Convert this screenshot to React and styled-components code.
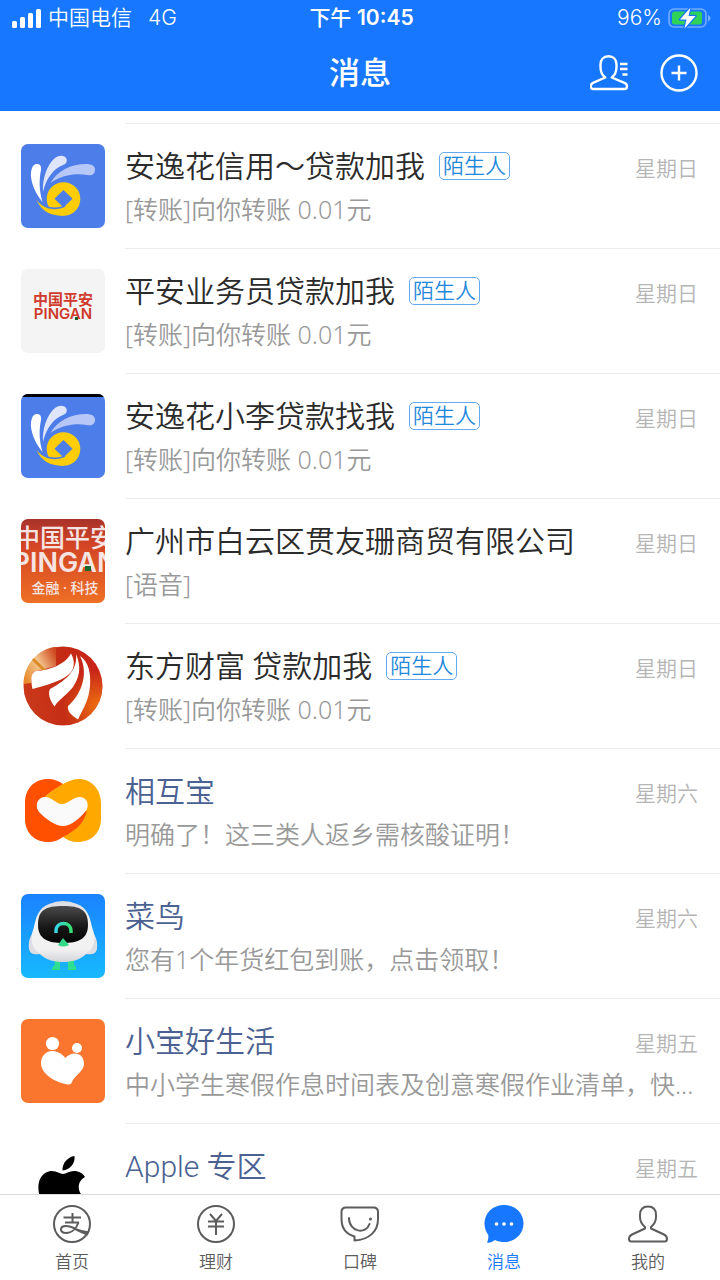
import React from 'react'
import styled, { createGlobalStyle } from 'styled-components'


const chats = [
    { id: 1, name: '安逸花信用～贷款加我', text: '[转账]向你转账 0.01元', time: '星期日', stranger: true, Avatar: FlowerAvatar },
    { id: 2, name: '平安业务员贷款加我', text: '[转账]向你转账 0.01元', time: '星期日', stranger: true, Avatar: PinganAvatar },
    { id: 3, name: '安逸花小李贷款找我', text: '[转账]向你转账 0.01元', time: '星期日', stranger: true, Avatar: FlowerBarAvatar },
    { id: 4, name: '广州市白云区贯友珊商贸有限公司', text: '[语音]', time: '星期日', Avatar: PinganPhotoAvatar },
    { id: 5, name: '东方财富 贷款加我', text: '[转账]向你转账 0.01元', time: '星期日', stranger: true, Avatar: FortuneAvatar },
    { id: 6, name: '相互宝', text: '明确了！这三类人返乡需核酸证明！', time: '星期六', official: true, Avatar: XianghubaoAvatar },
    { id: 7, name: '菜鸟', text: '您有1个年货红包到账，点击领取！', time: '星期六', official: true, Avatar: CainiaoAvatar },
    { id: 8, name: '小宝好生活', text: '中小学生寒假作息时间表及创意寒假作业清单，快...', time: '星期五', official: true, Avatar: XiaobaoAvatar },
    { id: 9, name: 'Apple 专区', text: '', time: '星期五', official: true, Avatar: AppleAvatar },
]

const tabs = [
    { name: '首页', Icon: HomeIcon },
    { name: '理财', Icon: WealthIcon },
    { name: '口碑', Icon: KoubeiIcon },
    { name: '消息', Icon: MessageIcon, active: true },
    { name: '我的', Icon: MineIcon },
]

function App() {
  return (
    <Page>
      <GlobalStyle />
      <Header>
        <StatusBar>
            <StatusSide>
                <SignalIcon />
                <span>中国电信</span>
                <Network>4G</Network>
            </StatusSide>
            <Clock>下午 <b>10:45</b></Clock>
            <StatusSide $end>
                <span>96%</span>
                <BatteryIcon />
            </StatusSide>
        </StatusBar>
        <TitleBar>
            <PageTitle>消息</PageTitle>
            <Actions>
                <IconButton aria-label="通讯录"><ContactsIcon /></IconButton>
                <IconButton aria-label="添加"><AddIcon /></IconButton>
            </Actions>
        </TitleBar>
      </Header>
      <ChatList>
        {chats.map(({ id, name, text, time, stranger, official, Avatar }) => (
            <ChatRow key={id}>
                <Avatar />
                <ChatBody>
                    <ChatTop>
                        <ChatName $official={official}>{name}</ChatName>
                        {stranger && <Badge>陌生人</Badge>}
                        <Time>{time}</Time>
                    </ChatTop>
                    <Preview>{text}</Preview>
                </ChatBody>
            </ChatRow>
        ))}
      </ChatList>
      <TabBar>
        {tabs.map(({ name, Icon, active }) => (
            <Tab key={name} $active={active}>
                <Icon />
                <span>{name}</span>
            </Tab>
        ))}
      </TabBar>
    </Page>
  )
}

/* ---------- status bar and header icons ---------- */

function SignalIcon() {
    return (
        <svg width="30" height="19" viewBox="0 0 30 19" fill="#fff">
            <rect x="0" y="12" width="5" height="7" rx="1.5" />
            <rect x="8" y="8" width="5" height="11" rx="1.5" />
            <rect x="16" y="4" width="5" height="15" rx="1.5" />
            <rect x="24" y="0" width="5" height="19" rx="1.5" />
        </svg>
    )
}

function BatteryIcon() {
    return (
        <svg width="43" height="22" viewBox="0 0 43 22">
            <rect x="1" y="2" width="37" height="18" rx="5" fill="none" stroke="#74acff" strokeWidth="1.6" />
            <path d="M40 8q2.500 .800 2.500 3.200t-2.500 3.200z" fill="#74acff" />
            <rect x="4" y="4.500" width="30" height="13" rx="2.500" fill="#30d158" />
            <path d="M22.500 .500L12 12.500h6.500L16.500 21.500 27.500 9H20.500z" fill="#fff" stroke="#1777ff" strokeWidth="2.400" strokeLinejoin="round" paintOrder="stroke" />
        </svg>
    )
}

function ContactsIcon() {
    return (
        <svg width="40" height="38" viewBox="0 0 40 38" fill="none" stroke="#fff" strokeWidth="2.400" strokeLinejoin="round">
            <path d="M15.200 23.500C12 21 10.500 17 10.500 13V10.500C10.500 5.500 13.500 2.200 18.500 2.200S26.500 5.500 26.500 10.500V13C26.500 17 25 21 21.800 23.500L34.500 28.800C36.200 29.500 37 30.800 37 32.300C37 34.300 36 35 34.500 35H3C1.500 35 .800 34.300 .800 32.300C.800 30.800 1.500 29.500 3 28.800Z" />
            <path d="M30 10H37.500M30 15H37.500M32.500 20.500H37.500" />
        </svg>
    )
}

function AddIcon() {
    return (
        <svg width="40" height="40" viewBox="0 0 40 40" fill="none" stroke="#fff" strokeWidth="2.400">
            <circle cx="20" cy="20" r="17.500" />
            <path d="M12.500 20H27.500M20 12.500V27.500" />
        </svg>
    )
}

/* ---------- avatars ---------- */

function FlowerDrawing() {
    return (
        <>
            <path d="M21.500 58C14 49 9 37 10 28C11 22 13 20 16 20C19 20 20.500 22 20 26C18 36 18 46 21.500 58Z" fill="#fff" />
            <path d="M22 48C21 36 26 20 34 14C38 11 43 11 45 14C47 17 45 20 42 21C32 25 25 35 22 48Z" fill="#dfe6fc" />
            <path d="M29.500 39C36 27 50 20 65 20C71 20 74 22 74 26C74 30 71 32 66 31C54 29 41 31 29.500 39Z" fill="#b7c8f8" />
            <circle cx="42.500" cy="55" r="16.800" fill="#fecd08" />
            <path d="M15.500 56C20 67 30 72 42 71.800L46 66C34 67 22 65 15.500 56Z" fill="#fecd08" />
            <path d="M19 58C26 65 36 66 44 62" fill="none" stroke="#4c7de8" strokeWidth="1.600" />
            <path d="M42.500 46L51.500 54.800L42.500 63.500L33.500 54.800Z" fill="#4c7de8" />
        </>
    )
}

function FlowerAvatar() {
    return (
        <AvatarSvg viewBox="0 0 84 84">
            <rect width="84" height="84" fill="#4c7de8" />
            <FlowerDrawing />
        </AvatarSvg>
    )
}

function FlowerBarAvatar() {
    return (
        <AvatarSvg viewBox="0 0 84 84">
            <rect width="84" height="84" fill="#4c7de8" />
            <rect width="84" height="3" fill="#000" />
            <FlowerDrawing />
        </AvatarSvg>
    )
}

function PinganAvatar() {
    return (
        <PinganBox>
            <span>中国平安</span>
            <b>PINGAN</b>
        </PinganBox>
    )
}

function PinganPhotoAvatar() {
    return (
        <PhotoBox>
            <span>中国平安</span>
            <b>PINGAN</b>
            <small>金融 · 科技</small>
        </PhotoBox>
    )
}

function FortuneAvatar() {
    return (
        <AvatarSvg viewBox="0 0 84 84">
            <defs>
                <linearGradient id="fortune" x1="0" y1="0.600" x2="1" y2="0.400">
                    <stop offset="0" stopColor="#c9391a" />
                    <stop offset="0.600" stopColor="#c42a14" />
                    <stop offset="1" stopColor="#c9241a" />
                </linearGradient>
                <radialGradient id="fortuneGlow" cx="0.950" cy="0.750" r="0.450">
                    <stop offset="0" stopColor="#ee7010" />
                    <stop offset="1" stopColor="#ee7010" stopOpacity="0" />
                </radialGradient>
                <linearGradient id="fortuneShine" x1="0" y1="0.800" x2="1" y2="0.200">
                    <stop offset="0" stopColor="#e88a2c" />
                    <stop offset="0.500" stopColor="#f3c890" />
                    <stop offset="1" stopColor="#cf4a20" />
                </linearGradient>
            </defs>
            <circle cx="42" cy="42" r="39.500" fill="url(#fortune)" />
            <circle cx="42" cy="42" r="39.500" fill="url(#fortuneGlow)" />
            <path d="M2.500 40C3 20 18 4 35 3L35 22L12 28L10 39Z" fill="url(#fortuneShine)" />
            <path d="M12 15L24 27" stroke="#dc8a24" strokeWidth="3" />
            <path d="M11.500 45C10 38 10 32 12 29Q13 27 16 27C28 26 44 21 50 9.500C55 18 53 27 47 31C40 37 26 41 11.500 45Z" fill="#fff" />
            <path d="M55 10C61 24 58 34 52 43C46 51 38 55 33.500 62.500C28 55 27 49 29 45C42 38 57 28 55 10Z" fill="#fff" />
            <path d="M59 12C68 18 70 30 69 42C68 56 62 65 57 75.500C50 71 46 67 47 62C58 53 69 32 59 12Z" fill="#fff" />
        </AvatarSvg>
    )
}

function XianghubaoAvatar() {
    return (
        <AvatarSvg viewBox="0 0 84 84">
            <path d="M42 15C47 12 53 10 58 10C70 10 80 20 80 34V50C80 64 70 73 57 73C51 73 46 71 42 68L22 30C28 23 35 20 42 15Z" fill="#ffa900" />
            <path d="M27 10C33 10 38 12 42 15C35 20 28 23 22 30L41 40L66 41C64 54 54 62 42 68C38 71 33 73 27 73C13 73 4 63 4 50V34C4 20 13 10 27 10Z" fill="#ff5000" />
            <path d="M42 15C35 20 28 23 22 30L41 40L66 42V20Z" fill="#ffa900" />
            <path d="M24 28C31 28 35 35 41 35S52 28 59 28C67 28 69 38 64 43C59 49 50 57 42 57C34 57 24 49 19 44C13 38 16 28 24 28Z" fill="#fafafa" />
        </AvatarSvg>
    )
}

function CainiaoAvatar() {
    return (
        <AvatarSvg viewBox="0 0 84 84">
            <defs>
                <linearGradient id="sky" x1="0" y1="0" x2="0" y2="1">
                    <stop offset="0" stopColor="#1a82ff" />
                    <stop offset="1" stopColor="#18b9ff" />
                </linearGradient>
                <linearGradient id="shell" x1="0" y1="0" x2="0" y2="1">
                    <stop offset="0" stopColor="#d9dce2" />
                    <stop offset="0.300" stopColor="#f4f4f5" />
                    <stop offset="0.800" stopColor="#f1f1f2" />
                    <stop offset="1" stopColor="#d3d4d8" />
                </linearGradient>
                <linearGradient id="visor" x1="0" y1="0" x2="0" y2="1">
                    <stop offset="0" stopColor="#4a4a4c" />
                    <stop offset="0.600" stopColor="#151515" />
                    <stop offset="1" stopColor="#050505" />
                </linearGradient>
                <linearGradient id="eye" x1="0" y1="0" x2="1" y2="0">
                    <stop offset="0" stopColor="#35d7e8" />
                    <stop offset="1" stopColor="#35e070" />
                </linearGradient>
            </defs>
            <rect width="84" height="84" fill="url(#sky)" />
            <path d="M33 66H39V76H31Q31 72 34 71ZM47 66H53V71Q56 72 55 76H47Z" fill="#2fdf8f" />
            <path d="M16 34C9 40 7 48 8 55C9 60 14 61 19 60ZM68 34C75 40 77 48 76 55C75 60 70 61 65 60Z" fill="#dcdee3" />
            <path d="M28 10Q42 4 56 10C67 14 69 24 71 33C76 46 73 55 64 61C58 66 51 68 42 68S26 66 20 61C11 55 8 46 13 33C15 24 17 14 28 10Z" fill="url(#shell)" />
            <path d="M42 12C60 12 67 16 67 31C67 45 57 49 42 49S17 45 17 31C17 16 24 12 42 12Z" fill="url(#visor)" />
            <path d="M35 39V37C35 27 50 27 50 37V39" fill="none" stroke="url(#eye)" strokeWidth="3.400" />
            <path d="M42 44L48 51Q42 54 37 51Z" fill="#35d98c" />
        </AvatarSvg>
    )
}

function XiaobaoAvatar() {
    return (
        <AvatarSvg viewBox="0 0 84 84">
            <rect width="84" height="84" fill="#fa762f" />
            <circle cx="31.500" cy="24.500" r="6.600" fill="#fff" />
            <circle cx="56" cy="29" r="5" fill="#fff" />
            <path d="M44.500 39C40 34 36 32 31 32C25 32 20 37 20 44C20 54 32 63 47 65.500Q50 66 51 63C53 57 63 52 63 45C63 38 59 34.500 54 34.500C50 34.500 47 36 44.500 39Z" fill="#fff" />
        </AvatarSvg>
    )
}

function AppleAvatar() {
    return (
        <AvatarSvg viewBox="0 0 84 84">
            <path d="M53.500 12C54.500 19 49 26 41.500 26.500C41 19.500 46.500 13 53.500 12Z" />
            <path d="M42 30C45 30 48 27 53 27C58 27 62 29.500 64 33C55 38 56 50 65 54C62 63 57 71 52 71C48 71 46 69 42 69S35 71 32 71C25 71 13 49 19 35C22 29 27 27 31 27C36 27 39 30 42 30Z" />
        </AvatarSvg>
    )
}

/* ---------- tab icons ---------- */

function HomeIcon() {
    return (
        <svg width="40" height="40" viewBox="0 0 40 40" fill="none" stroke="currentColor" strokeWidth="2">
            <circle cx="20" cy="20" r="18" />
            <path d="M11.500 13.500H29M20.500 9V19M13 18.500H27" />
            <path d="M26.500 18.500C24.500 24 20 29 14 29C7 29 7.500 22 14 22C18 22 21 23.500 24 25" />
            <path d="M22 23.500C27 25.500 32 26.500 37.500 27.500L35.500 31.500C31 30 26 28 21 25Z" fill="currentColor" stroke="none" />
        </svg>
    )
}

function WealthIcon() {
    return (
        <svg width="40" height="40" viewBox="0 0 40 40" fill="none" stroke="currentColor" strokeWidth="2">
            <circle cx="20" cy="20" r="18" />
            <path d="M14 10L20 17L26 10M12 17.500H28M12 22.500H28M20 17V31" />
        </svg>
    )
}

function KoubeiIcon() {
    return (
        <svg width="40" height="40" viewBox="0 0 40 40" fill="none" stroke="currentColor" strokeWidth="2" strokeLinejoin="round">
            <path d="M6 3.500H33.500Q38 3.500 38 8V15C38 27 30 35.500 14.500 36.500V32.500C6 30 1.500 24 1.500 15V8Q1.500 3.500 6 3.500Z" />
            <path d="M9 14C9 28 26 31 29.500 20" strokeLinecap="round" />
            <circle cx="30.500" cy="15" r="1.500" fill="currentColor" stroke="none" />
        </svg>
    )
}

function MessageIcon() {
    return (
        <svg width="40" height="40" viewBox="0 0 40 40" fill="currentColor">
            <path d="M20 1C31 1 39.500 9 39.500 19.500S31 38 20 38C17 38 14 37.400 11 36C8.500 38 5.500 39 3 38.500C4.500 36 4.500 33 4.300 31C2 28 .500 24 .500 19.500C.500 9 9 1 20 1Z" />
            <g fill="#fff">
                <circle cx="12.500" cy="20" r="1.800" />
                <circle cx="20" cy="20" r="1.800" />
                <circle cx="27.500" cy="20" r="1.800" />
            </g>
        </svg>
    )
}

function MineIcon() {
    return (
        <svg width="40" height="40" viewBox="0 0 40 40" fill="none" stroke="currentColor" strokeWidth="2" strokeLinejoin="round">
            <path d="M17 24.500V23C14 20.500 12 17 12 13V11C12 5.500 15 2.500 20 2.500S28 5.500 28 11V13C28 17 26 20.500 23 23V24.500L36 30.500Q39 32 39 35Q39 37.500 36.500 37.500H3.500Q1 37.500 1 35Q1 32 4 30.500Z" />
        </svg>
    )
}

const GlobalStyle = createGlobalStyle`
    *{
        box-sizing: border-box;
    }

    body{
        margin: 0;
        background-color: #fff;
        font-family: Roboto, 'Noto Sans CJK SC', sans-serif;
        font-weight: 350;
    }

    svg{
        display: block;
        flex-shrink: 0;
    }

    button{
        border: none;
        padding: 0;
        background: none;
        font: inherit;
        cursor: pointer;
    }
`;

const Page = styled.div`
    height: 100vh;
    display: flex;
    flex-direction: column;
`;

const Header = styled.header`
    background-color: #1777ff;
    color: #fff;
    padding-bottom: 10px;
    margin-bottom: 12px;
`;

const StatusBar = styled.div`
    display: grid;
    grid-template-columns: 1fr auto 1fr;
    align-items: center;
    height: 36px;
    padding: 0 9px 0 12px;
    font-family: Inter, 'Noto Sans CJK SC', sans-serif;
    font-size: 21px;
    line-height: 36px;
`;

const StatusSide = styled.div`
    display: flex;
    align-items: center;
    gap: 6px;
    justify-content: ${({ $end }) => $end ? 'flex-end' : 'flex-start'};
`;

const Network = styled.span`
    margin-left: 10px;
`;

const Clock = styled.div`
    font-weight: 500;

    b{
        font-weight: 600;
    }
`;

const TitleBar = styled.div`
    display: grid;
    grid-template-columns: 1fr auto 1fr;
    align-items: center;
    height: 65px;
    padding: 8px 21px 0;
`;

const PageTitle = styled.h1`
    grid-column: 2;
    margin: 0;
    padding-top: 2px;
    font-size: 31px;
    line-height: 44px;
    font-weight: 500;
`;

const Actions = styled.div`
    display: flex;
    align-items: center;
    justify-content: flex-end;
    gap: 29px;
`;

const IconButton = styled.button`
    color: #fff;
`;

const ChatList = styled.ul`
    flex: 1;
    min-height: 0;
    overflow: hidden;
    margin: 0;
    padding: 0;
    list-style: none;
`;

const ChatRow = styled.li`
    display: flex;
    align-items: center;
    height: 125px;
    padding-left: 21px;
    gap: 20px;
`;

const AvatarSvg = styled.svg`
    width: 84px;
    height: 84px;
    border-radius: 7px;
`;

const PinganBox = styled.div`
    position: relative;
    width: 84px;
    height: 84px;
    flex-shrink: 0;
    border-radius: 7px;
    background-color: #f4f4f4;
    color: #cf3a2c;
    display: flex;
    flex-direction: column;
    align-items: center;
    padding-top: 24px;
    font-size: 15px;
    line-height: 14px;
    font-weight: 700;

    b{
        font-family: Inter, sans-serif;
        font-weight: 600;
    }

    &::after{
        content: '';
        position: absolute;
        left: 54px;
        top: 48px;
        width: 3px;
        height: 3px;
        background-color: #1d5a2a;
    }
`;

const PhotoBox = styled.div`
    position: relative;
    width: 84px;
    height: 84px;
    flex-shrink: 0;
    border-radius: 7px;
    overflow: hidden;
    background: linear-gradient(#a8322a, #d24426 30%, #ee6f24);
    color: #f6e4e2;
    display: flex;
    flex-direction: column;
    align-items: center;
    padding: 8px 0 0 4px;
    font-size: 25px;
    line-height: 24px;
    font-weight: 500;
    white-space: nowrap;

    b{
        font-family: Inter, sans-serif;
        font-size: 27px;
        font-weight: 600;
    }

    small{
        font-size: 14px;
        line-height: 26px;
    }

    &::after{
        content: '';
        position: absolute;
        left: 64px;
        top: 47px;
        width: 6px;
        height: 5px;
        background-color: #1d6a2e;
    }
`;

const ChatBody = styled.div`
    flex: 1;
    min-width: 0;
    height: 100%;
    border-top: 1px solid #ececec;
    padding: 20px 22px 0 0;
`;

const ChatTop = styled.div`
    display: flex;
    align-items: center;
    height: 44px;
`;

const ChatName = styled.h2`
    margin: 0;
    padding-top: 2px;
    font-size: 30px;
    line-height: 42px;
    font-weight: 350;
    color: ${({ $official }) => $official ? '#4a6191' : '#2b2b2b'};
`;

const Badge = styled.span`
    margin-left: 14px;
    padding: 0 3px;
    border: 1px solid #64aaf0;
    border-radius: 5px;
    font-size: 21px;
    line-height: 26px;
    color: #1e88dc;
`;

const Time = styled.time`
    margin-left: auto;
    padding-top: 6px;
    font-size: 21px;
    line-height: 38px;
    color: #b5b5b5;
`;

const Preview = styled.p`
    margin: 0;
    font-family: 'Noto Sans', 'Noto Sans CJK SC', sans-serif;
    font-size: 25px;
    line-height: 42px;
    color: #999;
    overflow: hidden;
    white-space: nowrap;
    text-overflow: ellipsis;
`;

const TabBar = styled.nav`
    display: grid;
    grid-template-columns: repeat(5, 1fr);
    height: 86px;
    border-top: 1px solid #dcdcdc;
    background-color: #fff;
`;

const Tab = styled.button`
    display: flex;
    flex-direction: column;
    align-items: center;
    padding-top: 9px;
    gap: 4px;
    font-size: 17px;
    line-height: 28px;
    color: ${({ $active }) => $active ? '#1777ff' : '#5c5c5c'};
`;

export default App
